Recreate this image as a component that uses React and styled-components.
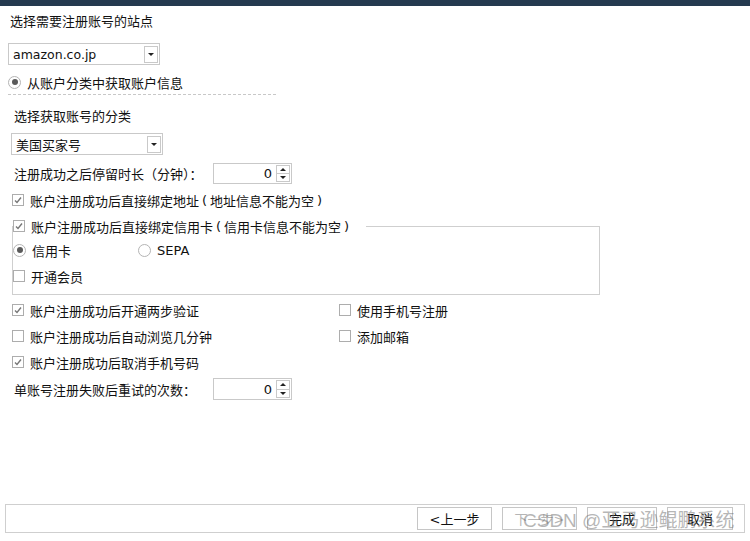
import React from "react";
import styled, { createGlobalStyle } from "styled-components";

const GlobalStyle = createGlobalStyle`
  html, body {
    margin: 0;
    padding: 0;
    background: #fff;
  }
  body {
    font-family: "DejaVu Sans", "Noto Sans CJK SC", sans-serif;
    font-size: 13px;
    color: #111;
  }
  * {
    box-sizing: border-box;
  }
`;

const Page = styled.div`
  position: relative;
  width: 750px;
  height: 541px;
  display: flex;
  flex-direction: column;
  padding-bottom: 8px;
  overflow: hidden;
`;

const TopBar = styled.div`
  height: 6px;
  flex-shrink: 0;
  background: #253a4f;
`;

// one row of the form
const Line = styled.div`
  display: flex;
  align-items: center;
  height: ${(p) => p.$h || 20}px;
  margin-top: ${(p) => p.$mt || 0}px;
  padding-left: ${(p) => p.$pl || 0}px;
  white-space: nowrap;
  flex-shrink: 0;
`;

const FieldLabel = styled.span`
  width: ${(p) => p.$w}px;
  flex-shrink: 0;
`;

// half-width brackets sit a little looser in the original dialog font
const Paren = styled.span`
  margin: 0 3px;
`;

const Divider = styled.div`
  margin: 2px 0 0 8px;
  width: 268px;
  border-top: 1px dashed #c8c8c8;
  flex-shrink: 0;
`;

const SelectBox = styled.div`
  display: flex;
  align-items: center;
  width: 152px;
  height: 22px;
  margin: ${(p) => p.$mt}px 0 0 ${(p) => p.$ml}px;
  padding: 0 1px 0 4px;
  border: 1px solid #c9c9c9;
  flex-shrink: 0;
`;

const SelectValue = styled.span`
  font-size: ${(p) => (p.$latin ? "12.5px" : "13px")};
`;

const SelectArrow = styled.span`
  margin-left: auto;
  width: 14px;
  height: 17px;
  border: 1px solid #c9c9c9;
  display: flex;
  align-items: center;
  justify-content: center;

  &::after {
    content: "";
    border-left: 3px solid transparent;
    border-right: 3px solid transparent;
    border-top: 3px solid #222;
  }
`;

const Check = styled.span`
  width: 12px;
  height: 12px;
  border: 1px solid #adadad;
  background: #fff;
  flex-shrink: 0;
  display: flex;
  align-items: center;
  justify-content: center;
  margin-right: 6px;
`;

const Radio = styled.span`
  width: 13px;
  height: 13px;
  border-radius: 50%;
  border: 1px solid #b4b4b4;
  flex-shrink: 0;
  display: flex;
  align-items: center;
  justify-content: center;
  margin-right: 6px;

  &::after {
    content: "";
    width: 6px;
    height: 6px;
    border-radius: 50%;
    background: ${(p) => (p.$on ? "#5a5a5a" : "transparent")};
  }
`;

const Option = styled.span`
  display: flex;
  align-items: center;
  width: ${(p) => (p.$w ? `${p.$w}px` : "auto")};
`;

const Spin = styled.div`
  display: flex;
  align-items: center;
  justify-content: flex-end;
  width: 79px;
  height: ${(p) => p.$h}px;
  padding: 1px;
  border: 1px solid #c9c9c9;
`;

const SpinValue = styled.span`
  margin-right: 4px;
`;

const SpinButtons = styled.div`
  display: flex;
  flex-direction: column;
  width: 14px;
  height: 100%;
  border: 1px solid #c9c9c9;
`;

const SpinHalf = styled.span`
  flex: 1;
  display: flex;
  align-items: center;
  justify-content: center;

  & + & {
    border-top: 1px solid #c9c9c9;
  }

  &::after {
    content: "";
    border-left: 3px solid transparent;
    border-right: 3px solid transparent;
    ${(p) => (p.$up ? "border-bottom: 3px solid #222;" : "border-top: 3px solid #222;")}
  }
`;

const Group = styled.fieldset`
  margin: 6px 0 0 12px;
  width: 588px;
  min-width: 0;
  padding: 0 0 8px 0;
  border: 1px solid #cfcfcf;
  flex-shrink: 0;
`;

const GroupLegend = styled.legend`
  display: flex;
  align-items: center;
  height: 20px;
  margin: 0;
  padding: 0 14px 0 0;
  white-space: nowrap;
`;

const OptionGrid = styled.div`
  display: grid;
  grid-template-columns: 327px auto;
  grid-auto-rows: 20px;
  row-gap: 6px;
  margin: 5px 0 0 12px;
  flex-shrink: 0;
`;

const Footer = styled.div`
  display: flex;
  align-items: center;
  justify-content: flex-end;
  gap: 10px;
  height: 29px;
  margin: auto 5px 0;
  padding-right: 11px;
  border: 1px solid #cfcfcf;
  flex-shrink: 0;
`;

const Btn = styled.button`
  width: ${(p) => p.$w}px;
  height: 23px;
  padding: 0;
  background: #fff;
  border: 1px solid #c6c6c6;
  font: inherit;
  color: ${(p) => (p.disabled ? "#b5b5b5" : "#111")};
`;

const Watermark = styled.div`
  position: absolute;
  left: 523px;
  top: 509px;
  font-family: "Liberation Sans", "Noto Sans CJK SC", sans-serif;
  font-size: 19px;
  line-height: 24px;
  color: rgba(110, 110, 110, 0.5);
  white-space: nowrap;
  pointer-events: none;
`;

const CheckBox = ({ on }) => (
  <Check>
    {on && (
      <svg width="10" height="10" viewBox="0 0 10 10">
        <polyline points="2,5.5 4,7.5 8,2.5" fill="none" stroke="#777" strokeWidth="1.4" />
      </svg>
    )}
  </Check>
);

const Spinner = ({ value, h }) => (
  <Spin $h={h}>
    <SpinValue>{value}</SpinValue>
    <SpinButtons>
      <SpinHalf $up />
      <SpinHalf />
    </SpinButtons>
  </Spin>
);

const App = () => {
  return (
    <Page>
      <GlobalStyle />
      <TopBar />

      <Line $h={28} $pl={10}>选择需要注册账号的站点</Line>
      <SelectBox $mt={9} $ml={8}>
        <SelectValue $latin>amazon.co.jp</SelectValue>
        <SelectArrow />
      </SelectBox>
      <Line $mt={7} $pl={8}>
        <Radio $on />
        从账户分类中获取账户信息
      </Line>
      <Divider />

      <Line $mt={10} $pl={14}>选择获取账号的分类</Line>
      <SelectBox $mt={8} $ml={11}>
        <SelectValue>美国买家号</SelectValue>
        <SelectArrow />
      </SelectBox>

      <Line $mt={8} $h={21} $pl={14}>
        <FieldLabel $w={199}>注册成功之后停留时长（分钟）：</FieldLabel>
        <Spinner value="0" h={21} />
      </Line>

      <Line $mt={6} $pl={12}>
        <CheckBox on />
        账户注册成功后直接绑定地址<Paren>(</Paren>地址信息不能为空<Paren>)</Paren>
      </Line>

      <Group>
        <GroupLegend>
          <CheckBox on />
          账户注册成功后直接绑定信用卡<Paren>(</Paren>信用卡信息不能为空<Paren>)</Paren>
        </GroupLegend>
        <Line $mt={4}>
          <Option $w={125}>
            <Radio $on />
            信用卡
          </Option>
          <Option>
            <Radio />
            SEPA
          </Option>
        </Line>
        <Line $mt={6}>
          <CheckBox />
          开通会员
        </Line>
      </Group>

      <OptionGrid>
        <Option><CheckBox on />账户注册成功后开通两步验证</Option>
        <Option><CheckBox />使用手机号注册</Option>
        <Option><CheckBox />账户注册成功后自动浏览几分钟</Option>
        <Option><CheckBox />添加邮箱</Option>
        <Option><CheckBox on />账户注册成功后取消手机号码</Option>
      </OptionGrid>

      <Line $mt={6} $h={22} $pl={14}>
        <FieldLabel $w={199}>单账号注册失败后重试的次数：</FieldLabel>
        <Spinner value="0" h={22} />
      </Line>

      <Footer>
        <Btn $w={75}>&lt;上一步</Btn>
        <Btn $w={75} disabled>下一步&gt;</Btn>
        <Btn $w={70}>完成</Btn>
        <Btn $w={66}>取消</Btn>
      </Footer>
      <Watermark>CSDN @亚马逊鲲鹏系统</Watermark>
    </Page>
  );
};

export default App;
